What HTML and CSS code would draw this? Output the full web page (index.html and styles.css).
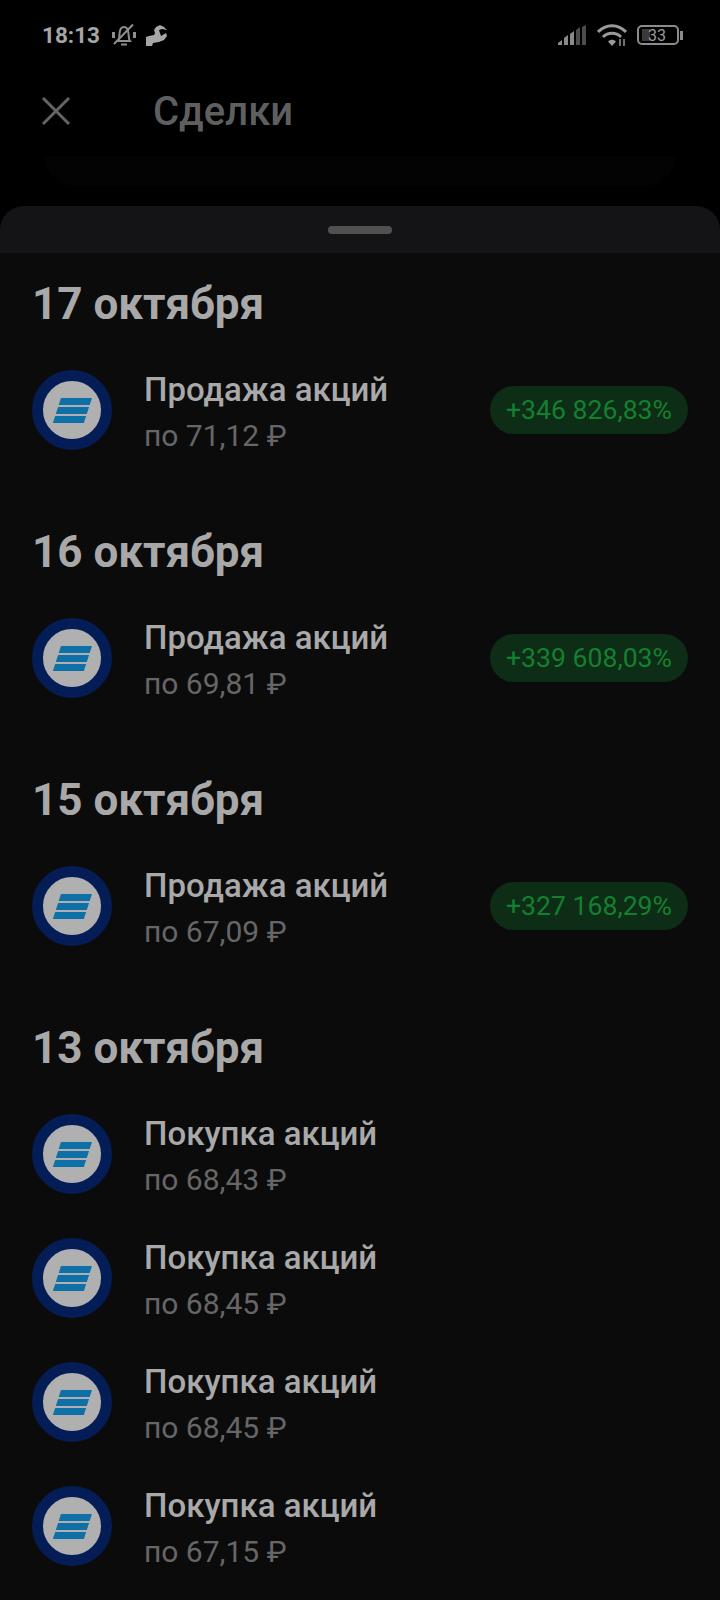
FILE: index.html
```html
<!DOCTYPE html>
<html lang="ru">

<head>
    <meta charset="UTF-8">
    <meta name="viewport" content="width=device-width, initial-scale=1.0">
    <title>Сделки</title>
    <link rel="stylesheet" href="styles.css">
</head>

<body>
    <div class="status-bar">
        <div class="status-left">
            <span class="clock">18:13</span>
            <svg class="bell-icon" viewBox="0 0 26 24" width="26" height="24">
                <path d="M7 18c.8-1 1-2 1.200-4l.4-4C9 6 10.800 4 13 4s4 2 4.400 6l.4 4c.2 2 .4 3 1.200 4z" fill="none" stroke="#8f8f8f" stroke-width="2"/>
                <path d="M2.500 15V9M23.500 15V9" stroke="#8f8f8f" stroke-width="3"/>
                <path d="M10 21.500h6" stroke="#8f8f8f" stroke-width="2"/>
                <path d="M3 21L22 1.500" stroke="#8f8f8f" stroke-width="2"/>
            </svg>
            <svg class="app-icon" viewBox="0 0 21 21" width="21" height="21">
                <path d="M0 21v-9l3-1 5-1 1-2-1-3 2-3 4-2 4 2 3 3-5-1-3 1 1 3 1 3 5-3 1 3-3 4-5 2-6 1-1 3z" fill="#a6a6a6"/>
            </svg>
        </div>
        <div class="status-right">
            <svg viewBox="0 0 29 21" width="29" height="21">
                <path d="M0 20v-2l4-3v5z" fill="#8a8a8a"/>
                <path d="M6 20v-7l4-3v10z" fill="#8a8a8a"/>
                <path d="M12 20V9l4-3v14z" fill="#8a8a8a"/>
                <path d="M18 20V5l4-3v18z" fill="#4c4c4c"/>
                <path d="M24 20V2l4-2v20z" fill="#4c4c4c"/>
            </svg>
            <svg viewBox="0 0 30 22" width="30" height="22">
                <path d="M1 8c8-8.500 20-8.500 28 0" fill="none" stroke="#9a9a9a" stroke-width="3"/>
                <path d="M6 13c5-5 13-5 18 0" fill="none" stroke="#9a9a9a" stroke-width="3"/>
                <path d="M11 17.500c2.500-2.500 5.500-2.500 8 0l-4 4.500z" fill="#9a9a9a"/>
                <path d="M23 15v7M27 15v7" stroke="#8a8a8a" stroke-width="1.600"/>
            </svg>
            <div class="battery">
                <div class="battery-body"><span class="battery-fill"></span><span class="battery-num">33</span></div>
                <span class="battery-tip"></span>
            </div>
        </div>
    </div>

    <div class="header">
        <svg class="close-icon" viewBox="0 0 30 30" width="30" height="30">
            <path d="M2 2l26 26M28 2L2 28" stroke="#656565" stroke-width="3"/>
        </svg>
        <h1>Сделки</h1>
    </div>

    <div class="ghost-bar"></div>

    <div class="sheet-top">
        <div class="handle"></div>
    </div>

    <div class="deals">
        <section class="day">
            <h2>17 октября</h2>
            <div class="deal">
                <div class="logo"><div class="logo-mark"><span></span><span></span><span></span></div></div>
                <div class="deal-text">
                    <div class="deal-title">Продажа акций</div>
                    <div class="deal-price">по 71,12 ₽</div>
                </div>
                <div class="pill">+346 826,83%</div>
            </div>
        </section>

        <section class="day">
            <h2>16 октября</h2>
            <div class="deal">
                <div class="logo"><div class="logo-mark"><span></span><span></span><span></span></div></div>
                <div class="deal-text">
                    <div class="deal-title">Продажа акций</div>
                    <div class="deal-price">по 69,81 ₽</div>
                </div>
                <div class="pill">+339 608,03%</div>
            </div>
        </section>

        <section class="day">
            <h2>15 октября</h2>
            <div class="deal">
                <div class="logo"><div class="logo-mark"><span></span><span></span><span></span></div></div>
                <div class="deal-text">
                    <div class="deal-title">Продажа акций</div>
                    <div class="deal-price">по 67,09 ₽</div>
                </div>
                <div class="pill">+327 168,29%</div>
            </div>
        </section>

        <section class="day">
            <h2>13 октября</h2>
            <div class="deal">
                <div class="logo"><div class="logo-mark"><span></span><span></span><span></span></div></div>
                <div class="deal-text">
                    <div class="deal-title">Покупка акций</div>
                    <div class="deal-price">по 68,43 ₽</div>
                </div>
            </div>
            <div class="deal">
                <div class="logo"><div class="logo-mark"><span></span><span></span><span></span></div></div>
                <div class="deal-text">
                    <div class="deal-title">Покупка акций</div>
                    <div class="deal-price">по 68,45 ₽</div>
                </div>
            </div>
            <div class="deal">
                <div class="logo"><div class="logo-mark"><span></span><span></span><span></span></div></div>
                <div class="deal-text">
                    <div class="deal-title">Покупка акций</div>
                    <div class="deal-price">по 68,45 ₽</div>
                </div>
            </div>
            <div class="deal">
                <div class="logo"><div class="logo-mark"><span></span><span></span><span></span></div></div>
                <div class="deal-text">
                    <div class="deal-title">Покупка акций</div>
                    <div class="deal-price">по 67,15 ₽</div>
                </div>
            </div>
        </section>
    </div>
</body>

</html>
```

FILE: styles.css
```css
body {
    font-family: Roboto, "Liberation Sans", sans-serif;
    margin: 0;
    padding: 0;
    background-color: #000;
    color: #a9a9a9;
    height: 1600px;
    overflow: hidden;
}

.status-bar {
    height: 70px;
    padding: 0 37px 0 42px;
    display: flex;
    justify-content: space-between;
    align-items: center;
}

.status-left {
    display: flex;
    align-items: center;
}

.clock {
    font-size: 22.5px;
    font-weight: 700;
    color: #a6a6a6;
    margin-right: 11px;
}

.app-icon {
    margin-left: 9px;
}

.status-right {
    display: flex;
    align-items: center;
    gap: 10px;
}

.battery {
    display: flex;
    align-items: center;
    gap: 1px;
}

.battery-body {
    box-sizing: border-box;
    width: 42px;
    height: 20px;
    border: 2px solid #8c8c8c;
    border-radius: 5px;
    display: flex;
    align-items: center;
    padding: 0 3px;
    position: relative;
}

.battery-fill {
    width: 8px;
    height: 12px;
    background: #3a3a3a;
}

.battery-num {
    position: absolute;
    left: 9px;
    font-size: 16px;
    color: #9a9a9a;
}

.battery-tip {
    width: 3px;
    height: 9px;
    background: #8c8c8c;
}

.header {
    height: 82px;
    padding-left: 41px;
    display: flex;
    align-items: center;
}

.header h1 {
    margin: 0 0 0 82px;
    font-size: 40px;
    font-weight: 500;
    color: #5f5f5f;
}

.ghost-bar {
    height: 30px;
    margin: 4px 45px 20px;
    background: #030303;
    border-radius: 0 0 30px 30px;
}

.sheet-top {
    height: 47px;
    background: #141416;
    border-radius: 24px 24px 0 0;
    display: flex;
    justify-content: center;
}

.handle {
    width: 64px;
    height: 8px;
    margin-top: 20px;
    border-radius: 4px;
    background: #505050;
}

.deals {
    background: #0b0b0c;
    height: 1347px;
}

.day {
    padding-bottom: 29px;
}

.day h2 {
    margin: 0;
    padding-left: 32px;
    height: 95px;
    line-height: 102px;
    font-size: 44px;
    font-weight: 700;
    color: #a8a8a8;
}

.deal {
    height: 124px;
    padding: 0 32px;
    display: flex;
    align-items: center;
}

.logo {
    box-sizing: border-box;
    width: 80px;
    height: 80px;
    flex-shrink: 0;
    border: 11px solid #041d57;
    border-radius: 50%;
    background: #b0b0b0;
    display: flex;
    justify-content: center;
    align-items: center;
}

.logo-mark {
    width: 31px;
    display: flex;
    flex-direction: column;
    gap: 2.5px;
    transform: skewX(-18deg);
}

.logo-mark span {
    height: 6.5px;
    background: #0f70a8;
}

.deal-text {
    margin-left: 32px;
    padding-top: 6px;
    flex: 1;
}

.deal-title {
    font-size: 33px;
    font-weight: 500;
    color: #a9a9a9;
    line-height: 44px;
}

.deal-price {
    font-size: 30px;
    color: #666;
    line-height: 44px;
    margin-top: 2px;
}

.pill {
    height: 48px;
    line-height: 48px;
    padding: 0 16px;
    border-radius: 24px;
    background: #0d2d17;
    color: #14802f;
    font-size: 26.6px;
}
```
